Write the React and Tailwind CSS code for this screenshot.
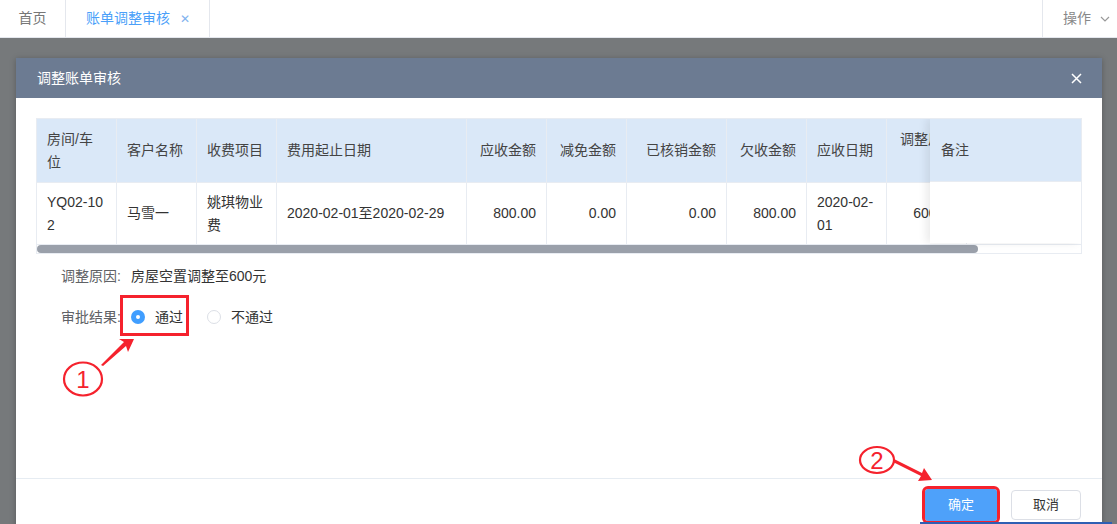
import React from "react";

const font = { fontFamily: '"Liberation Sans", "Noto Sans CJK SC", sans-serif' };

const cols = [
  { w: 80, h: "房间/车位", b: "YQ02-102", align: "left" },
  { w: 80, h: "客户名称", b: "马雪一", align: "left" },
  { w: 80, h: "收费项目", b: "姚琪物业费", align: "left" },
  { w: 190, h: "费用起止日期", b: "2020-02-01至2020-02-29", align: "left" },
  { w: 80, h: "应收金额", b: "800.00", align: "right" },
  { w: 80, h: "减免金额", b: "0.00", align: "right" },
  { w: 100, h: "已核销金额", b: "0.00", align: "right" },
  { w: 80, h: "欠收金额", b: "800.00", align: "right" },
  { w: 80, h: "应收日期", b: "2020-02-01", align: "left" },
  { w: 80, h: "调整后金额", b: "600.00", align: "right" },
  { w: 120, h: "", b: "", align: "left" },
];

function Cell({ w, children, align, header }) {
  return (
    <div
      className={`shrink-0 flex items-center border-r border-[#e8ecf2] px-[10px] ${
        align === "right" ? "justify-end text-right" : "justify-start text-left"
      } ${header ? "h-[63px]" : "h-[61px]"}`}
      style={{ width: w }}
    >
      <div className="leading-[23px] break-all">{children}</div>
    </div>
  );
}

export default function App() {
  return (
    <div
      className="relative w-[1117px] h-[524px] overflow-hidden bg-[#76797b] text-[14px]"
      style={font}
    >
      {/* top tabs */}
      <div className="h-[38px] bg-white border-b border-[#e4e7ed] flex items-stretch">
        <div className="w-[66px] border-r border-[#e4e7ed] flex items-center justify-center text-[#777] text-[14px]">
          首页
        </div>
        <div className="w-[144px] border-r border-[#e4e7ed] flex items-center pl-[20px] text-[#4a9ff9] text-[14px]">
          <span>账单调整审核</span>
          <span className="ml-[10px] text-[12px] text-[#7fb3ee]">✕</span>
        </div>
        <div className="flex-1" />
        <div className="w-[75px] border-l border-[#e4e7ed] flex items-center pl-[20px] text-[#888] text-[14px]">
          <span>操作</span>
          <svg className="ml-[9px]" width="10" height="6" viewBox="0 0 10 6">
            <path d="M1 1 L5 5 L9 1" stroke="#999" strokeWidth="1.2" fill="none" />
          </svg>
        </div>
      </div>

      {/* dialog */}
      <div className="ml-[16px] mt-[20px] w-[1086px] h-[480px] bg-white shadow-[0_1px_6px_rgba(0,0,0,0.25)] flex flex-col">
        <div className="h-[40px] shrink-0 bg-[#6c7b92] flex items-center justify-between pl-[21px] pr-[20px] text-white text-[14px]">
          <span>调整账单审核</span>
          <svg width="11" height="11" viewBox="0 0 11 11">
            <path d="M1 1 L10 10 M10 1 L1 10" stroke="#fff" strokeWidth="1.5" />
          </svg>
        </div>

        <div className="h-[380px] shrink-0 pt-[20px] px-[20px] text-[#333]">
          {/* table */}
          <div className="relative w-[1046px] border border-[#e8ecf2] overflow-hidden">
            <div className="flex bg-[#dae8f8] border-b border-[#e8ecf2] text-[#444]">
              {cols.map((c, i) => (
                <Cell key={i} w={c.w} align={c.align} header>
                  {c.h}
                </Cell>
              ))}
            </div>
            <div className="flex text-[#333]">
              {cols.map((c, i) => (
                <Cell key={i} w={c.w} align={c.align}>
                  {c.b}
                </Cell>
              ))}
            </div>
            {/* scrollbar */}
            <div className="h-[9px] border-t border-[#e8ecf2] relative">
              <div className="absolute left-0 top-0 w-[941px] h-[8px] rounded-full bg-[#9aa0aa]" />
            </div>
            {/* fixed column */}
            <div className="absolute right-0 top-0 w-[151px] h-[124px] bg-white shadow-[-4px_0_8px_rgba(0,0,0,0.08)] flex flex-col">
              <div className="h-[63px] bg-[#dae8f8] border-b border-[#e8ecf2] flex items-center pl-[11px] text-[#444]">
                备注
              </div>
              <div className="flex-1 bg-white" />
            </div>
          </div>

          <div className="mt-[12px] pl-[25px] flex items-center h-[20px] text-[14px]">
            <span className="text-[#606266]">调整原因:</span>
            <span className="ml-[10px] text-[#333]">房屋空置调整至600元</span>
          </div>
          <div className="mt-[21px] pl-[25px] flex items-center h-[20px] text-[14px]">
            <span className="text-[#606266]">审批结果:</span>
            <span className="ml-[10px] w-[14px] h-[14px] rounded-full bg-[#409eff] flex items-center justify-center">
              <span className="w-[4px] h-[4px] rounded-full bg-white" />
            </span>
            <span className="ml-[10px] text-[#333]">通过</span>
            <span className="ml-[24px] w-[14px] h-[14px] rounded-full border border-[#dcdfe6] bg-white" />
            <span className="ml-[10px] text-[#333]">不通过</span>
          </div>
        </div>

        <div className="flex-1 border-t border-[#e6ecf2] flex justify-end items-start pt-[10px] pr-[21px] gap-[14px]">
          <button className="w-[72px] h-[32px] rounded-[3px] bg-[#4ea1fa] text-white text-[13px] outline-[3px] outline-[#f5222d] outline outline-offset-[0px]">
            确定
          </button>
          <button className="mt-[1px] w-[70px] h-[30px] rounded-[4px] border border-[#dcdfe6] bg-white text-[#333] text-[13px]">
            取消
          </button>
        </div>
      </div>

      {/* annotation: red box around 通过 */}
      <div className="absolute left-[120px] top-[295px] w-[69px] h-[41px] border-[3px] border-[#f5222d]" />

      {/* annotations svg */}
      <svg className="absolute left-0 top-0 pointer-events-none" width="1117" height="524">
        <ellipse cx="83" cy="379" rx="19" ry="16.5" fill="none" stroke="#f5222d" strokeWidth="2.2" />
        <text x="83" y="388" textAnchor="middle" fontSize="24" fill="#f5222d" fontFamily="Liberation Sans, sans-serif">1</text>
        <polygon points="101,365 124,342 119,339 134,339 128,352 126,346 103,366" fill="#f5222d" />
        <ellipse cx="877" cy="460" rx="17" ry="13" fill="none" stroke="#f5222d" strokeWidth="2.2" />
        <text x="877" y="469" textAnchor="middle" fontSize="24" fill="#f5222d" fontFamily="Liberation Sans, sans-serif">2</text>
        <polygon points="894,459 922,473 924,468 932,480 918,481 921,476 893,462" fill="#f5222d" />
      </svg>

      {/* bottom blue line */}
      <div className="absolute left-[920px] bottom-0 w-[192px] h-[2px] bg-[#2f5fb3]" />
    </div>
  );
}
